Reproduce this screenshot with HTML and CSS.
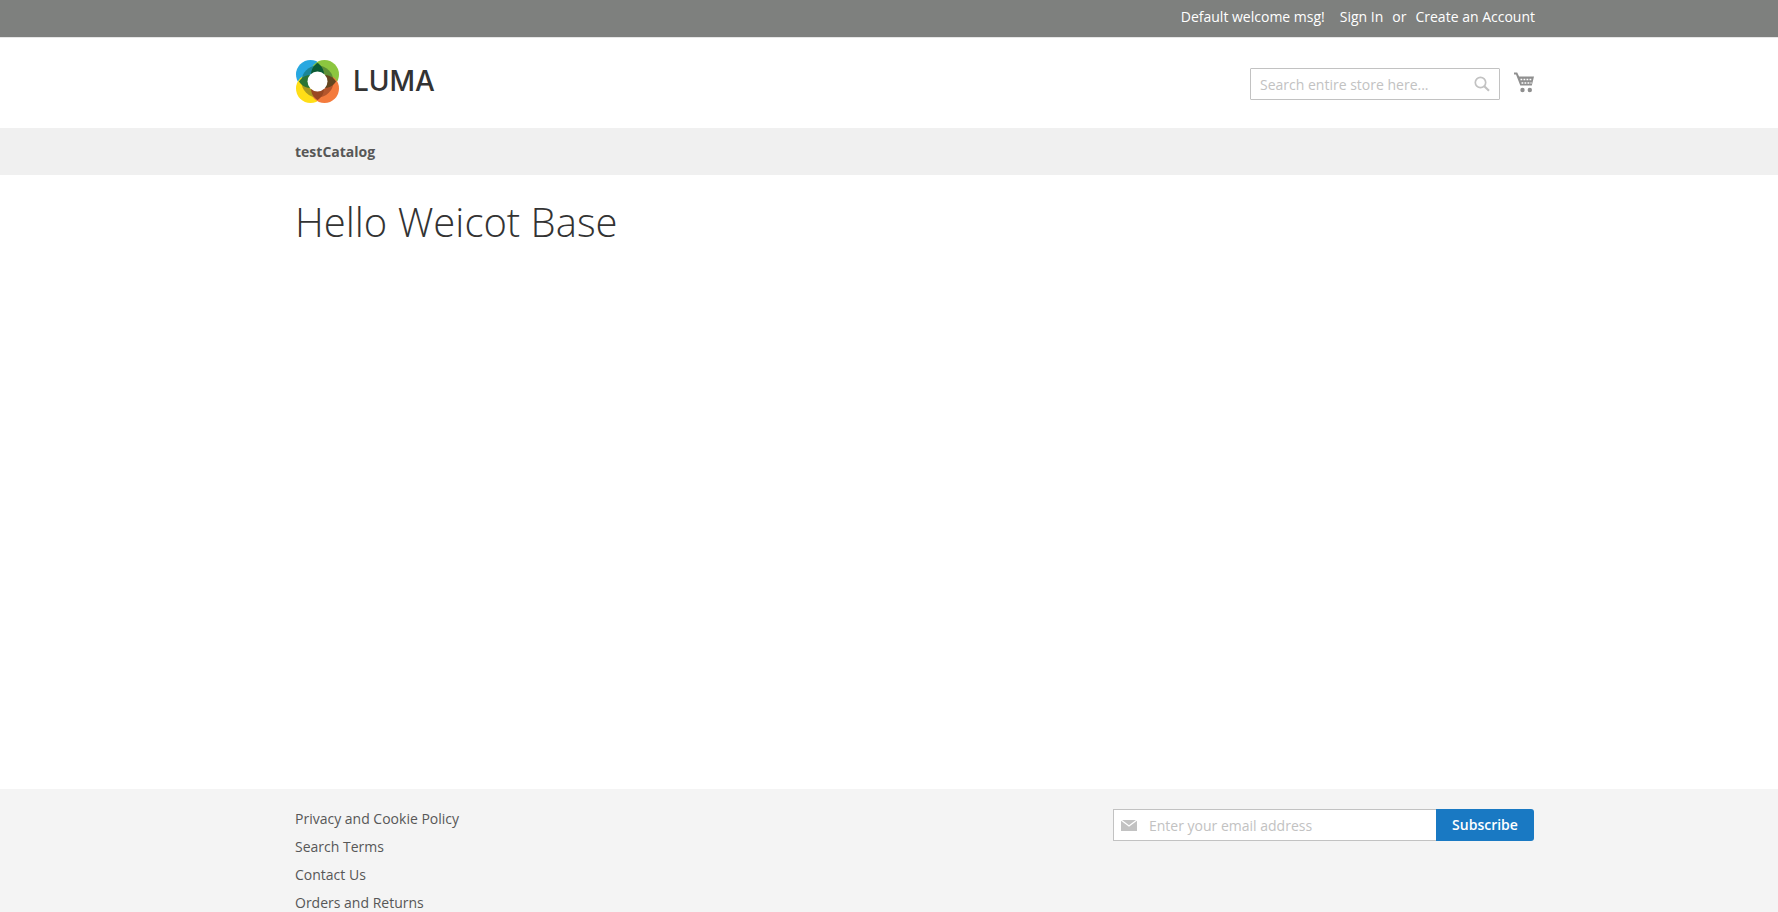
FILE: index.html
```html
<!DOCTYPE html>
<html lang="en">
<head>
    <meta charset="UTF-8">
    <meta name="viewport" content="width=device-width, initial-scale=1.0">
    <title>Hello Weicot Base</title>
    <link rel="stylesheet" href="styles.css">
</head>
<body>
    <header>
        <div class="panel">
            <div class="container panel-links">
                <span class="welcome">Default welcome msg!</span>
                <a href="#">Sign In</a>
                <span>or</span>
                <a href="#">Create an Account</a>
            </div>
        </div>
        <div class="container header-content">
            <a class="logo" href="#">
                <svg width="43" height="43" viewBox="0 0 43 43" aria-hidden="true">
                    <defs>
                        <clipPath id="ring"><circle cx="21.5" cy="21.5" r="16"/></clipPath>
                        <clipPath id="blue"><circle cx="14.5" cy="14.5" r="13.5"/></clipPath>
                        <clipPath id="orange"><circle cx="28.5" cy="28.5" r="13.5"/></clipPath>
                    </defs>
                    <circle cx="14.5" cy="14.5" r="14.5" fill="#28a8e0"/>
                    <circle cx="28.5" cy="14.5" r="14.5" fill="#8cc63f"/>
                    <circle cx="14.5" cy="28.5" r="14.5" fill="#ffde17"/>
                    <circle cx="28.5" cy="28.5" r="14.5" fill="#f47b3d"/>
                    <g clip-path="url(#ring)">
                        <path d="M5 5h16.5v16.5H5z" fill="#1b8596"/>
                        <path d="M21.5 5H38v16.5H21.5z" fill="#5c8f35"/>
                        <path d="M5 21.5h16.5V38H5z" fill="#a99a20"/>
                        <path d="M21.5 21.5H38V38H21.5z" fill="#b4552c"/>
                    </g>
                    <g clip-path="url(#blue)">
                        <circle cx="28.5" cy="14.5" r="13.5" fill="#0b5b35"/>
                        <circle cx="14.5" cy="28.5" r="13.5" fill="#2a7434"/>
                    </g>
                    <g clip-path="url(#orange)">
                        <circle cx="28.5" cy="14.5" r="13.5" fill="#64461f"/>
                        <circle cx="14.5" cy="28.5" r="13.5" fill="#9a4722"/>
                    </g>
                    <circle cx="21.5" cy="21.5" r="10" fill="#fff"/>
                </svg>
                <span class="logo-text">LUMA</span>
            </a>
            <form class="search">
                <input type="text" aria-label="Search" placeholder="Search entire store here...">
                <button type="button" aria-label="Search">
                    <svg width="16" height="16" viewBox="0 0 16 16" fill="none" stroke="#c2c2c2" aria-hidden="true">
                        <circle cx="6.5" cy="6.5" r="5.2" stroke-width="1.7"/>
                        <path d="M10.3 10.3l4.7 4.4" stroke-width="2.2"/>
                    </svg>
                </button>
            </form>
            <a class="cart" href="#" aria-label="My Cart">
                <svg width="20" height="22" viewBox="0 0 20 22" aria-hidden="true">
                    <path d="M0 .5h3.2l1.9 4H20l-2.2 9H6.3L2 2.5H0z" fill="#8f8f8f"/>
                    <path d="M6.5 7.5h11.8M7.5 11h10" fill="none" stroke="#fff" stroke-width="1.6" stroke-dasharray="1.8 1.2"/>
                    <circle cx="8.5" cy="18" r="2.2" fill="#8f8f8f"/>
                    <circle cx="15.8" cy="18" r="2.2" fill="#8f8f8f"/>
                </svg>
            </a>
        </div>
    </header>
    <nav>
        <div class="container">
            <a href="#">testCatalog</a>
        </div>
    </nav>
    <main class="container">
        <h1>Hello Weicot Base</h1>
    </main>
    <footer>
        <div class="container footer-content">
            <ul>
                <li><a href="#">Privacy and Cookie Policy</a></li>
                <li><a href="#">Search Terms</a></li>
                <li><a href="#">Contact Us</a></li>
                <li><a href="#">Orders and Returns</a></li>
            </ul>
            <form class="newsletter">
                <label for="newsletter">
                    <svg width="16" height="11" viewBox="0 0 16 11" aria-label="Email">
                        <path d="M0 0h16v11H0z" fill="#c2c2c2"/>
                        <path d="M0 0l8 6 8-6" fill="none" stroke="#fff" stroke-width="1.3"/>
                    </svg>
                </label>
                <input type="email" id="newsletter" placeholder="Enter your email address">
                <button type="button">Subscribe</button>
            </form>
        </div>
    </footer>
</body>
</html>
```
FILE: styles.css
```css
* {
    box-sizing: border-box;
}
body {
    margin: 0;
    min-height: 100vh;
    display: flex;
    flex-direction: column;
    background-color: #fff;
    color: #333;
    font-family: "Open Sans", sans-serif;
    font-size: 14px;
    line-height: 19px;
}
a {
    color: inherit;
    text-decoration: none;
}
a:hover {
    text-decoration: underline;
}
input,
button {
    font: inherit;
}
/* content column sits slightly right of centre */
.container {
    width: 100%;
    max-width: 1332px;
    margin: 0 auto;
    padding: 0 20px 0 72px;
}
.panel {
    background-color: #7e807e;
    border-bottom: 1px solid #e6e6e6;
    color: #fff;
}
.panel-links {
    display: flex;
    justify-content: flex-end;
    gap: 9px;
    padding-top: 7px;
    padding-bottom: 11px;
}
.welcome {
    margin-right: 6px;
}
.header-content {
    display: flex;
    align-items: flex-start;
    padding-top: 22px;
    padding-right: 21px;
    padding-bottom: 25px;
}
.logo {
    display: flex;
    align-items: center;
    gap: 14px;
    margin-right: auto;
    padding-left: 1px;
}
.logo:hover {
    text-decoration: none;
}
.logo-text {
    font-family: Inter, sans-serif;
    font-size: 28px;
    font-weight: 500;
}
.search {
    display: flex;
    width: 250px;
    height: 32px;
    margin-top: 8px;
    border: 1px solid #c2c2c2;
    border-radius: 1px;
    background-color: #fff;
}
.search input {
    flex: 1;
    min-width: 0;
    padding: 0 0 0 9px;
    border: none;
    background: none;
}
input::placeholder {
    color: #c2c2c2;
}
.search button {
    display: flex;
    align-items: center;
    padding: 0 9px;
    border: none;
    background: none;
    cursor: pointer;
}
.cart {
    display: flex;
    margin-top: 12px;
    margin-left: 14px;
}
nav {
    background-color: #f0f0f0;
    padding: 14px 0;
    color: #575757;
    font-weight: 700;
}
main {
    flex: 1;
}
h1 {
    margin: 25px 0 0;
    font-size: 40px;
    font-weight: 300;
    line-height: 44px;
}
footer {
    overflow: hidden;
    background-color: #f4f4f4;
    color: #575757;
}
.footer-content {
    display: flex;
    justify-content: space-between;
    align-items: flex-start;
    padding-top: 20px;
    padding-right: 21px;
}
footer ul {
    display: grid;
    gap: 9px;
    margin: 0;
    padding: 0;
    list-style: none;
}
.newsletter {
    display: flex;
    height: 32px;
    width: 421px;
    border-radius: 3px;
}
.newsletter label {
    display: flex;
    align-items: center;
    padding: 0 0 0 7px;
    border: 1px solid #c2c2c2;
    border-right: none;
    background-color: #fff;
}
.newsletter input {
    flex: 1;
    min-width: 0;
    padding: 0 12px;
    border: 1px solid #c2c2c2;
    border-width: 1px 0;
    border-radius: 0;
    background-color: #fff;
}
.newsletter button {
    width: 98px;
    padding: 0 0 2px;
    border: none;
    border-radius: 0 3px 3px 0;
    background-color: #1979c3;
    color: #fff;
    font-weight: 600;
    cursor: pointer;
}
.newsletter button:hover {
    background-color: #006bb4;
}
```
